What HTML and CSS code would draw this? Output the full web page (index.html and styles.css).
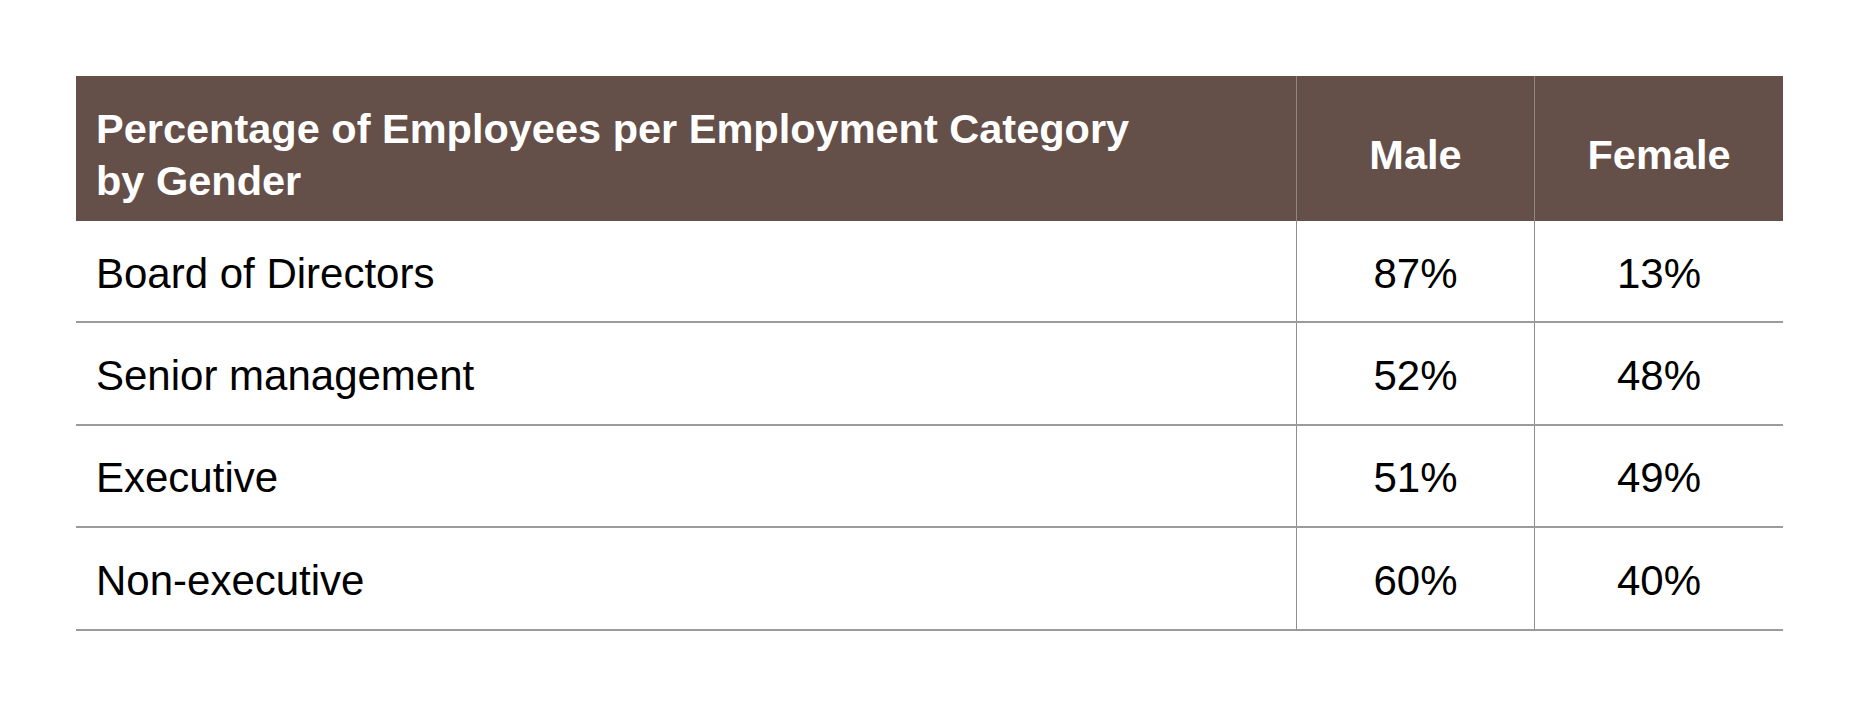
FILE: index.html
```html
<!DOCTYPE html>
<html lang="en">
<head>
<meta charset="utf-8">
<title>Percentage of Employees per Employment Category by Gender</title>
<link rel="stylesheet" href="styles.css">
</head>
<body>
  <div class="table">
    <div class="row head">
      <div class="cell first">Percentage of Employees per Employment Category<br>by Gender</div>
      <div class="cell num">Male</div>
      <div class="cell num">Female</div>
    </div>
    <div class="row">
      <div class="cell first">Board of Directors</div>
      <div class="cell num">87%</div>
      <div class="cell num">13%</div>
    </div>
    <div class="row">
      <div class="cell first">Senior management</div>
      <div class="cell num">52%</div>
      <div class="cell num">48%</div>
    </div>
    <div class="row">
      <div class="cell first">Executive</div>
      <div class="cell num">51%</div>
      <div class="cell num">49%</div>
    </div>
    <div class="row">
      <div class="cell first">Non-executive</div>
      <div class="cell num">60%</div>
      <div class="cell num">40%</div>
    </div>
  </div>
</body>
</html>
```

FILE: styles.css
```css
html, body {
  margin: 0;
  padding: 0;
  background: #ffffff;
}

body {
  font-family: "Liberation Sans", Arial, Helvetica, sans-serif;
  color: #000000;
}

.table {
  margin: 76px 0 0 76px;
  width: 1707px;
  display: flex;
  flex-direction: column;
}

.row {
  display: grid;
  grid-template-columns: 1220px 238px 249px;
  height: 102.4px;
  box-sizing: border-box;
  border-bottom: 2px solid #9b9b9b;
}

.row.head {
  height: 145px;
  border-bottom: none;
  background: #654f49;
  color: #ffffff;
  font-weight: bold;
}

.cell {
  display: flex;
  align-items: center;
  box-sizing: border-box;
  font-size: 42px;
  line-height: 52px;
  padding-top: 5px;
}

.head .cell {
  font-size: 41.5px;
  padding-top: 12px;
}

.cell.first {
  padding-left: 20px;
}

.cell.num {
  justify-content: center;
  border-left: 1px solid #8e8e8e;
}

.head .cell.num {
  border-left-color: #8f8582;
}
```
